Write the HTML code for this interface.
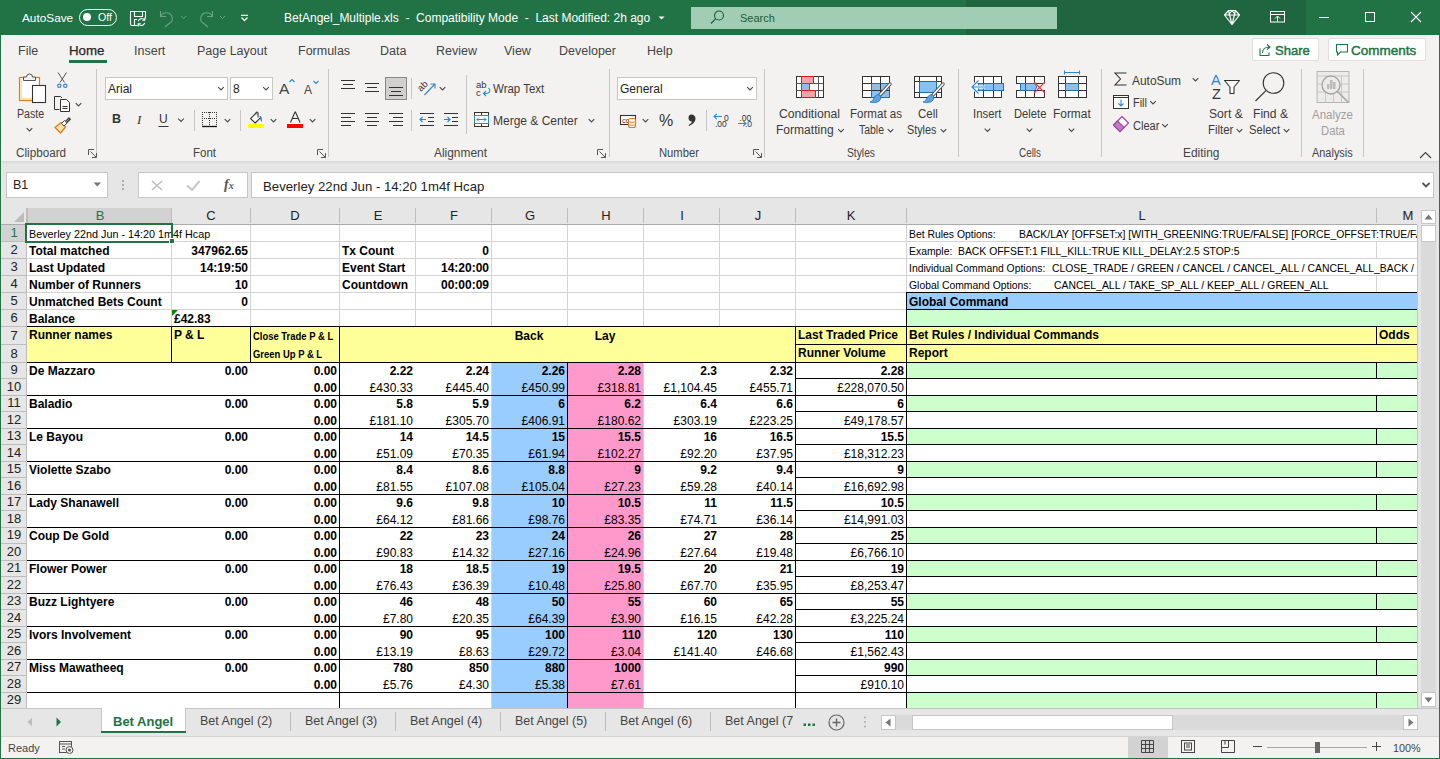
<!DOCTYPE html>
<html><head><meta charset="utf-8"><title>Excel</title>
<style>
*{margin:0;padding:0;box-sizing:border-box}
html,body{width:1440px;height:759px;overflow:hidden;background:#F3F2F1;font-family:"Liberation Sans",sans-serif}
div{position:absolute}
.t{white-space:nowrap;line-height:normal}
</style></head><body>

<div style="left:0px;top:0px;width:1440px;height:35px;background:#217346"></div>
<div style="left:966px;top:0px;width:340px;height:35px;background:#1F6640;border-top-left-radius:0"></div>
<div class="t" style="left:22px;top:11px;font-size:11.8px;color:#fff;font-weight:normal;">AutoSave</div>
<div style="left:79px;top:9px;width:38px;height:17px;border:1px solid #fff;border-radius:9px"></div>
<div style="left:83px;top:13px;width:8px;height:8px;background:#fff;border-radius:50%"></div>
<div class="t" style="left:98px;top:11px;font-size:10.5px;color:#fff;font-weight:normal;">Off</div>
<svg style="position:absolute;left:0;top:0" width="300" height="35" viewBox="0 0 300 35"><path d="M137.5 25.5H132a1.5 1.5 0 0 1-1.5-1.5V11.5h15V18.5" fill="none" stroke="#fff" stroke-width="1.1"/><path d="M134.5 11.5V16.5H142.5V11.5M134.5 25V19.5H137" fill="none" stroke="#fff" stroke-width="1.1"/><path d="M138.3 21.2a3.5 3.5 0 0 1 6.2-1.2M144.7 22.8a3.5 3.5 0 0 1-6.2 1.2" fill="none" stroke="#fff" stroke-width="1.1"/><path d="M144.8 17.6v2.6h-2.6M138.2 26.4v-2.6h2.6" fill="none" stroke="#fff" stroke-width="1.1"/><path d="M160.5 11v5.5h5.5" fill="none" stroke="#6BA484" stroke-width="1.1"/><path d="M160.8 16.2a6 6 0 0 1 11 5.3L165 27" fill="none" stroke="#6BA484" stroke-width="1.1"/><path d="M181 15.8l2.7 2.7 2.7-2.7" fill="none" stroke="#6BA484" stroke-width="1"/><path d="M212.5 11v5.5h-5.5" fill="none" stroke="#6BA484" stroke-width="1.1"/><path d="M212.2 16.2a6 6 0 0 0-11 5.3L208 27" fill="none" stroke="#6BA484" stroke-width="1.1"/><path d="M219.8 15.8l2.7 2.7 2.7-2.7" fill="none" stroke="#6BA484" stroke-width="1"/><path d="M241 15.3h7" stroke="#fff" stroke-width="1.1"/><path d="M241.5 17.5l3 3 3-3" fill="none" stroke="#fff" stroke-width="1.3"/></svg>
<div class="t" style="left:284px;top:11px;font-size:12px;color:#fff;font-weight:normal;">BetAngel_Multiple.xls&nbsp; - &nbsp;Compatibility Mode&nbsp; - &nbsp;Last Modified: 2h ago</div>
<svg style="position:absolute;left:657px;top:15px;" width="9" height="6" viewBox="0 0 9 6"><path d="M1.5 1.5h6l-3 3z" fill="#fff"/></svg>
<div style="left:691px;top:7px;width:366px;height:22px;background:#A0CDB3"></div>
<svg style="position:absolute;left:709px;top:9px;" width="16" height="16" viewBox="0 0 16 16"><circle cx="10" cy="6.5" r="4.5" fill="none" stroke="#1D5C38" stroke-width="1.1"/><path d="M6.8 9.7L2 14.5" stroke="#1D5C38" stroke-width="1.2"/></svg>
<div class="t" style="left:740px;top:12px;font-size:11px;color:#1D5C38;font-weight:normal;">Search</div>
<svg style="position:absolute;left:1223px;top:9px;" width="18" height="17" viewBox="0 0 18 17"><path d="M1.5 6l4-4.5h7l4 4.5-7.5 9.5z M1.5 6h15 M5.5 1.5l3.5 14 3.5-14 M5.5 6L9 1.5 12.5 6" fill="none" stroke="#fff" stroke-width="1.2" stroke-linejoin="round"/></svg>
<svg style="position:absolute;left:1270px;top:11px;" width="15" height="12" viewBox="0 0 15 12"><rect x="0.5" y="0.5" width="14" height="10.5" fill="none" stroke="#fff"/><path d="M0.5 3.5h14M7.5 10.5V5M5 7.5l2.5-2.5 2.5 2.5" fill="none" stroke="#fff"/></svg>
<div style="left:1319px;top:17px;width:10px;height:1px;background:#fff"></div>
<div style="left:1365px;top:12px;width:10px;height:10px;border:1px solid #fff"></div>
<svg style="position:absolute;left:1410px;top:11px;" width="12" height="12" viewBox="0 0 12 12"><path d="M1 1l10 10M11 1L1 11" stroke="#fff" stroke-width="1.1"/></svg>
<div style="left:0px;top:35px;width:1px;height:724px;background:#217346"></div>
<div style="left:1439px;top:35px;width:1px;height:724px;background:#217346"></div>
<div style="left:0px;top:758px;width:1440px;height:1px;background:#217346"></div>
<div class="t" style="left:18px;top:44px;font-size:12.5px;color:#444;font-weight:normal;">File</div>
<div class="t" style="left:69px;top:43px;font-size:13.3px;color:#262626;font-weight:normal;-webkit-text-stroke:0.25px #262626">Home</div>
<div class="t" style="left:134px;top:44px;font-size:12.5px;color:#444;font-weight:normal;">Insert</div>
<div class="t" style="left:197px;top:44px;font-size:12.5px;color:#444;font-weight:normal;">Page Layout</div>
<div class="t" style="left:298px;top:44px;font-size:12.5px;color:#444;font-weight:normal;">Formulas</div>
<div class="t" style="left:380px;top:44px;font-size:12.5px;color:#444;font-weight:normal;">Data</div>
<div class="t" style="left:436px;top:44px;font-size:12.5px;color:#444;font-weight:normal;">Review</div>
<div class="t" style="left:504px;top:44px;font-size:12.5px;color:#444;font-weight:normal;">View</div>
<div class="t" style="left:559px;top:44px;font-size:12.5px;color:#444;font-weight:normal;">Developer</div>
<div class="t" style="left:647px;top:44px;font-size:12.5px;color:#444;font-weight:normal;">Help</div>
<div style="left:69px;top:60px;width:38px;height:3px;background:#217346"></div>
<div style="left:1252px;top:38px;width:67px;height:23px;background:#fff;border:1px solid #E1DFDD;border-radius:2px"></div>
<svg style="position:absolute;left:1258px;top:43px;" width="14" height="14" viewBox="0 0 14 14"><path d="M2 5.5v7h9v-3" fill="none" stroke="#217346" stroke-width="1.1"/><path d="M4.5 10c0-4 3-6 7-6M9 1.5l3 2.5-3 2.5" fill="none" stroke="#217346" stroke-width="1.1"/></svg>
<div class="t" style="left:1275px;top:43px;font-size:13px;color:#217346;font-weight:normal;-webkit-text-stroke:0.45px #217346">Share</div>
<div style="left:1328px;top:38px;width:98px;height:23px;background:#fff;border:1px solid #E1DFDD;border-radius:2px"></div>
<svg style="position:absolute;left:1335px;top:43px;" width="14" height="13" viewBox="0 0 14 13"><path d="M1.5 1.5h11v7.5h-7l-3 3v-3h-1z" fill="none" stroke="#217346" stroke-width="1.1"/></svg>
<div class="t" style="left:1351px;top:43px;font-size:13.5px;color:#217346;font-weight:normal;-webkit-text-stroke:0.45px #217346">Comments</div>
<div style="left:96px;top:69px;width:1px;height:88px;background:#C8C6C4"></div>
<div style="left:328px;top:69px;width:1px;height:88px;background:#C8C6C4"></div>
<div style="left:609px;top:69px;width:1px;height:88px;background:#C8C6C4"></div>
<div style="left:764px;top:69px;width:1px;height:88px;background:#C8C6C4"></div>
<div style="left:958px;top:69px;width:1px;height:88px;background:#C8C6C4"></div>
<div style="left:1101px;top:69px;width:1px;height:88px;background:#C8C6C4"></div>
<div style="left:1301px;top:69px;width:1px;height:88px;background:#C8C6C4"></div>
<div style="left:1363px;top:69px;width:1px;height:88px;background:#C8C6C4"></div>
<div class="t" style="left:16px;top:146px;font-size:12px;color:#444;font-weight:normal;transform:scaleX(0.974);transform-origin:0 0;">Clipboard</div>
<div class="t" style="left:193px;top:146px;font-size:12px;color:#444;font-weight:normal;transform:scaleX(0.958);transform-origin:0 0;">Font</div>
<div class="t" style="left:434px;top:146px;font-size:12px;color:#444;font-weight:normal;transform:scaleX(0.993);transform-origin:0 0;">Alignment</div>
<div class="t" style="left:659px;top:146px;font-size:12px;color:#444;font-weight:normal;transform:scaleX(0.937);transform-origin:0 0;">Number</div>
<div class="t" style="left:847px;top:146px;font-size:12px;color:#444;font-weight:normal;transform:scaleX(0.857);transform-origin:0 0;">Styles</div>
<div class="t" style="left:1019px;top:146px;font-size:12px;color:#444;font-weight:normal;transform:scaleX(0.825);transform-origin:0 0;">Cells</div>
<div class="t" style="left:1183px;top:146px;font-size:12px;color:#444;font-weight:normal;transform:scaleX(0.992);transform-origin:0 0;">Editing</div>
<div class="t" style="left:1312px;top:146px;font-size:12px;color:#444;font-weight:normal;transform:scaleX(0.911);transform-origin:0 0;">Analysis</div>
<div style="left:0px;top:161px;width:1440px;height:598px;background:#E6E6E6"></div>
<div style="left:0px;top:161px;width:1440px;height:3px;background:linear-gradient(#D6D6D6,#E6E6E6)"></div>
<div style="left:0px;top:35px;width:1px;height:724px;background:#217346"></div>
<div style="left:1439px;top:35px;width:1px;height:724px;background:#217346"></div>
<div class="t" style="left:17px;top:107px;font-size:12px;color:#3B3A39;font-weight:normal;transform:scaleX(0.886);transform-origin:0 0;">Paste</div>
<div style="left:105px;top:77px;width:123px;height:23px;background:#fff;border:1px solid #C8C6C4"></div>
<div class="t" style="left:108px;top:82px;font-size:12px;color:#222;font-weight:normal;">Arial</div>
<div style="left:230px;top:77px;width:43px;height:23px;background:#fff;border:1px solid #C8C6C4"></div>
<div class="t" style="left:233px;top:82px;font-size:12px;color:#222;font-weight:normal;">8</div>
<div class="t" style="left:279px;top:80px;font-size:15.5px;color:#444;font-weight:normal;font-weight:normal">A</div>
<div class="t" style="left:304px;top:83px;font-size:12px;color:#444;font-weight:normal;">A</div>
<div class="t" style="left:112px;top:112px;font-size:12.5px;color:#333;font-weight:bold;">B</div>
<div class="t" style="left:137px;top:112px;font-size:13px;color:#333;font-weight:normal;font-style:italic;font-family:Liberation Serif,serif">I</div>
<div class="t" style="left:159px;top:112px;font-size:12px;color:#333;font-weight:normal;">U</div>
<div style="left:385px;top:77px;width:22px;height:23px;background:#D2D0CE;border:1px solid #8A8886"></div>
<div class="t" style="left:493px;top:82px;font-size:12px;color:#3B3A39;font-weight:normal;transform:scaleX(0.957);transform-origin:0 0;">Wrap Text</div>
<div class="t" style="left:493px;top:114px;font-size:12px;color:#3B3A39;font-weight:normal;transform:scaleX(1.000);transform-origin:0 0;">Merge &amp; Center</div>
<div style="left:617px;top:77px;width:140px;height:23px;background:#fff;border:1px solid #C8C6C4"></div>
<div class="t" style="left:620px;top:82px;font-size:12px;color:#222;font-weight:normal;">General</div>
<div class="t" style="left:659px;top:112px;font-size:16px;color:#333;font-weight:normal;">%</div>
<div class="t" style="left:779.4px;top:107px;font-size:12px;color:#3B3A39;font-weight:normal;transform:scaleX(1.016);transform-origin:0 0;">Conditional</div>
<div class="t" style="left:775.7px;top:123px;font-size:12px;color:#3B3A39;font-weight:normal;transform:scaleX(1.004);transform-origin:0 0;">Formatting</div>
<div class="t" style="left:850px;top:107px;font-size:12px;color:#3B3A39;font-weight:normal;transform:scaleX(0.963);transform-origin:0 0;">Format as</div>
<div class="t" style="left:859px;top:123px;font-size:12px;color:#3B3A39;font-weight:normal;transform:scaleX(0.871);transform-origin:0 0;">Table</div>
<div class="t" style="left:918px;top:107px;font-size:12px;color:#3B3A39;font-weight:normal;transform:scaleX(0.958);transform-origin:0 0;">Cell</div>
<div class="t" style="left:907.3px;top:123px;font-size:12px;color:#3B3A39;font-weight:normal;transform:scaleX(0.900);transform-origin:0 0;">Styles</div>
<div class="t" style="left:973.4px;top:107px;font-size:12px;color:#3B3A39;font-weight:normal;transform:scaleX(0.946);transform-origin:0 0;">Insert</div>
<div class="t" style="left:1013.6px;top:107px;font-size:12px;color:#3B3A39;font-weight:normal;transform:scaleX(0.934);transform-origin:0 0;">Delete</div>
<div class="t" style="left:1053px;top:107px;font-size:12px;color:#3B3A39;font-weight:normal;transform:scaleX(0.992);transform-origin:0 0;">Format</div>
<div class="t" style="left:1132px;top:74px;font-size:12px;color:#3B3A39;font-weight:normal;transform:scaleX(0.993);transform-origin:0 0;">AutoSum</div>
<div class="t" style="left:1133px;top:96px;font-size:12px;color:#3B3A39;font-weight:normal;transform:scaleX(0.907);transform-origin:0 0;">Fill</div>
<div class="t" style="left:1133px;top:119px;font-size:12px;color:#3B3A39;font-weight:normal;transform:scaleX(0.921);transform-origin:0 0;">Clear</div>
<div class="t" style="left:1211px;top:72px;font-size:14.5px;color:#2B88D8;font-weight:normal;">A</div>
<div class="t" style="left:1212px;top:86px;font-size:14.5px;color:#333;font-weight:normal;">Z</div>
<div class="t" style="left:1209px;top:107px;font-size:12px;color:#3B3A39;font-weight:normal;transform:scaleX(1.013);transform-origin:0 0;">Sort &amp;</div>
<div class="t" style="left:1208px;top:123px;font-size:12px;color:#3B3A39;font-weight:normal;transform:scaleX(0.952);transform-origin:0 0;">Filter</div>
<div class="t" style="left:1252.5px;top:107px;font-size:12px;color:#3B3A39;font-weight:normal;transform:scaleX(1.009);transform-origin:0 0;">Find &amp;</div>
<div class="t" style="left:1249px;top:123px;font-size:12px;color:#3B3A39;font-weight:normal;transform:scaleX(0.930);transform-origin:0 0;">Select</div>
<div class="t" style="left:1312px;top:108px;font-size:12px;color:#A19F9D;font-weight:normal;transform:scaleX(0.960);transform-origin:0 0;">Analyze</div>
<div class="t" style="left:1321px;top:124px;font-size:12px;color:#A19F9D;font-weight:normal;transform:scaleX(0.939);transform-origin:0 0;">Data</div>
<svg style="position:absolute;left:0;top:0" width="1440" height="170" viewBox="0 0 1440 170"><path d="M88.5 155v-5.5h5.5" fill="none" stroke="#555"/><path d="M90.5 151.5l5.5 5.5M96.5 153v4.5h-4.5" fill="none" stroke="#555"/><path d="M317.5 155v-5.5h5.5" fill="none" stroke="#555"/><path d="M319.5 151.5l5.5 5.5M325.5 153v4.5h-4.5" fill="none" stroke="#555"/><path d="M597.5 155v-5.5h5.5" fill="none" stroke="#555"/><path d="M599.5 151.5l5.5 5.5M605.5 153v4.5h-4.5" fill="none" stroke="#555"/><path d="M753.5 155v-5.5h5.5" fill="none" stroke="#555"/><path d="M755.5 151.5l5.5 5.5M761.5 153v4.5h-4.5" fill="none" stroke="#555"/><rect x="19.5" y="77.5" width="20" height="23" fill="#fff" stroke="#E87A1B" stroke-width="1.2"/><path d="M21 79v20h11" fill="none" stroke="#FCE4A8" stroke-width="2"/><path d="M23.5 80.5v-3.5h3a3 3 0 0 1 6 0h3v3.5z" fill="#F3F2F1" stroke="#555"/><rect x="32.5" y="85.5" width="13" height="17" fill="#fff" stroke="#333" stroke-width="1.1"/><path d="M26.7 128.1l2.8 2.8 2.8-2.8" fill="none" stroke="#444" stroke-width="1.05"/><path d="M58 72.5l6.5 10M66.5 72.5l-6.5 10" stroke="#555" stroke-width="1"/><circle cx="59.3" cy="85.8" r="1.7" fill="none" stroke="#2B88D8" stroke-width="1.2"/><circle cx="65.3" cy="85.8" r="1.7" fill="none" stroke="#2B88D8" stroke-width="1.2"/><path d="M54.5 109.5v-13h6l1.5 1.5" fill="none" stroke="#333"/><path d="M54.5 109.5h5" stroke="#333"/><path d="M60.5 111.5v-12h6l3 3v9z" fill="#fff" stroke="#333"/><path d="M62.5 106.5h5M62.5 108.5h5" stroke="#333"/><path d="M75.7 103.1l2.8 2.8 2.8-2.8" fill="none" stroke="#444" stroke-width="1.05"/><path d="M55 127.5l6-5 4.5 4.5-5 6z" fill="#FCE4A8" stroke="#E87A1B" stroke-width="1.3" stroke-linejoin="round"/><path d="M61.5 123.5l3-3 2.5 2.5-3 3z" fill="#fff" stroke="#444"/><path d="M65.5 121.5l3.5-3.5 1.2 1.2-3.5 3.5" fill="none" stroke="#444" stroke-width="1.4"/><path d="M218.2 87.1l2.8 2.8 2.8-2.8" fill="none" stroke="#444" stroke-width="1.05"/><path d="M263.2 87.1l2.8 2.8 2.8-2.8" fill="none" stroke="#444" stroke-width="1.05"/><path d="M289.5 82l2.5-2.5 2.5 2.5" fill="none" stroke="#2B88D8" stroke-width="1.1"/><path d="M313.5 81l2.5 2.5 2.5-2.5" fill="none" stroke="#2B88D8" stroke-width="1.1"/><path d="M158.5 126.5H168.5" stroke="#333" stroke-width="1"/><path d="M178.2 118.6l2.8 2.8 2.8-2.8" fill="none" stroke="#444" stroke-width="1.05"/><path d="M194.5 110v21" stroke="#C8C6C4"/><rect x="202" y="112" width="1" height="1" fill="#333"/><rect x="202" y="118" width="1" height="1" fill="#333"/><rect x="204" y="112" width="1" height="1" fill="#333"/><rect x="204" y="118" width="1" height="1" fill="#333"/><rect x="206" y="112" width="1" height="1" fill="#333"/><rect x="206" y="118" width="1" height="1" fill="#333"/><rect x="208" y="112" width="1" height="1" fill="#333"/><rect x="208" y="118" width="1" height="1" fill="#333"/><rect x="210" y="112" width="1" height="1" fill="#333"/><rect x="210" y="118" width="1" height="1" fill="#333"/><rect x="212" y="112" width="1" height="1" fill="#333"/><rect x="212" y="118" width="1" height="1" fill="#333"/><rect x="214" y="112" width="1" height="1" fill="#333"/><rect x="214" y="118" width="1" height="1" fill="#333"/><rect x="216" y="112" width="1" height="1" fill="#333"/><rect x="216" y="118" width="1" height="1" fill="#333"/><rect x="202" y="112" width="1" height="1" fill="#333"/><rect x="216" y="112" width="1" height="1" fill="#333"/><rect x="209" y="112" width="1" height="1" fill="#333"/><rect x="202" y="114" width="1" height="1" fill="#333"/><rect x="216" y="114" width="1" height="1" fill="#333"/><rect x="209" y="114" width="1" height="1" fill="#333"/><rect x="202" y="116" width="1" height="1" fill="#333"/><rect x="216" y="116" width="1" height="1" fill="#333"/><rect x="209" y="116" width="1" height="1" fill="#333"/><rect x="202" y="118" width="1" height="1" fill="#333"/><rect x="216" y="118" width="1" height="1" fill="#333"/><rect x="209" y="118" width="1" height="1" fill="#333"/><rect x="202" y="120" width="1" height="1" fill="#333"/><rect x="216" y="120" width="1" height="1" fill="#333"/><rect x="209" y="120" width="1" height="1" fill="#333"/><rect x="202" y="122" width="1" height="1" fill="#333"/><rect x="216" y="122" width="1" height="1" fill="#333"/><rect x="209" y="122" width="1" height="1" fill="#333"/><rect x="202" y="124" width="1" height="1" fill="#333"/><rect x="216" y="124" width="1" height="1" fill="#333"/><rect x="209" y="124" width="1" height="1" fill="#333"/><path d="M202 126.5H217" stroke="#111" stroke-width="1.3"/><path d="M224.7 119.1l2.8 2.8 2.8-2.8" fill="none" stroke="#444" stroke-width="1.05"/><path d="M240.5 110v21" stroke="#C8C6C4"/><path d="M256 113.2L250.6 118.6L255.2 123L260.3 117.8" fill="#fff" stroke="#333" stroke-width="1.1" stroke-linejoin="round"/><path d="M256 114.5v-1.5a1 1 0 0 1 2 0v4.5" fill="none" stroke="#333" stroke-width="1.1"/><path d="M259.6 116c1.4-0.2 2.6 1.2 2.3 6-0.9-0.8-1.6-2.8-2.3-6z" fill="#1F6FB5"/><rect x="248" y="124" width="16" height="4" fill="#FFFF00"/><path d="M270.7 119.1l2.8 2.8 2.8-2.8" fill="none" stroke="#444" stroke-width="1.05"/><path d="M290.5 122.5l4.5-10.5h0.5l4.5 10.5M292.3 118.5h6" fill="none" stroke="#333" stroke-width="1.1"/><rect x="287" y="124" width="16" height="4" fill="#FF0000"/><path d="M309.7 119.1l2.8 2.8 2.8-2.8" fill="none" stroke="#444" stroke-width="1.05"/><path d="M341 80.5H355" stroke="#333" stroke-width="1"/><path d="M343 84.5H353" stroke="#333" stroke-width="1"/><path d="M341 88.5H355" stroke="#333" stroke-width="1"/><path d="M365 83.5H379" stroke="#333" stroke-width="1"/><path d="M367 87.5H377" stroke="#333" stroke-width="1"/><path d="M365 91.5H379" stroke="#333" stroke-width="1"/><path d="M389 87.5H403" stroke="#333" stroke-width="1"/><path d="M391 91.5H401" stroke="#333" stroke-width="1"/><path d="M389 95.5H403" stroke="#333" stroke-width="1"/><path d="M411.5 78v21M411.5 110v21M466.5 75v59" stroke="#C8C6C4"/><text x="0" y="0" font-size="9.5" fill="#333" font-family="Liberation Sans" transform="translate(421 92) rotate(-45)">ab</text><path d="M424.5 95l10-10.5M430.5 84h4.5v4.5" fill="none" stroke="#2B88D8" stroke-width="1.1"/><path d="M439.7 87.1l2.8 2.8 2.8-2.8" fill="none" stroke="#444" stroke-width="1.05"/><text x="476" y="87.5" font-size="9.5" fill="#333" font-family="Liberation Sans">ab</text><text x="476" y="95.5" font-size="9.5" fill="#333" font-family="Liberation Sans">c</text><path d="M488.5 88c2 1 2 5-1.5 5.5h-3.5M486 91l-2.5 2.5 2.5 2.5" fill="none" stroke="#2B88D8" stroke-width="1.1"/><path d="M341 113.5H355" stroke="#333" stroke-width="1"/><path d="M341 117.5H351" stroke="#333" stroke-width="1"/><path d="M341 121.5H355" stroke="#333" stroke-width="1"/><path d="M341 125.5H351" stroke="#333" stroke-width="1"/><path d="M365 113.5H379" stroke="#333" stroke-width="1"/><path d="M367 117.5H377" stroke="#333" stroke-width="1"/><path d="M365 121.5H379" stroke="#333" stroke-width="1"/><path d="M367 125.5H377" stroke="#333" stroke-width="1"/><path d="M389 113.5H403" stroke="#333" stroke-width="1"/><path d="M393 117.5H403" stroke="#333" stroke-width="1"/><path d="M389 121.5H403" stroke="#333" stroke-width="1"/><path d="M393 125.5H403" stroke="#333" stroke-width="1"/><path d="M420 113.5H434" stroke="#333" stroke-width="1"/><path d="M428 117.5H434" stroke="#333" stroke-width="1"/><path d="M428 121.5H434" stroke="#333" stroke-width="1"/><path d="M420 125.5H434" stroke="#333" stroke-width="1"/><path d="M420 119.5h6M422.5 117l-2.5 2.5 2.5 2.5" fill="none" stroke="#2B88D8" stroke-width="1.2"/><path d="M444 113.5H458" stroke="#333" stroke-width="1"/><path d="M452 117.5H458" stroke="#333" stroke-width="1"/><path d="M452 121.5H458" stroke="#333" stroke-width="1"/><path d="M444 125.5H458" stroke="#333" stroke-width="1"/><path d="M444 119.5h6M447.5 117l2.5 2.5-2.5 2.5" fill="none" stroke="#2B88D8" stroke-width="1.2"/><rect x="474.5" y="112.5" width="14" height="14" fill="#fff" stroke="#333"/><path d="M481.5 112.5v3M481.5 123.5v3" stroke="#333"/><rect x="474.5" y="115.5" width="14" height="8" fill="#fff" stroke="#2B88D8"/><path d="M477 119.5h9M479 117.5l-2 2 2 2M484 117.5l2 2-2 2" fill="none" stroke="#2B88D8" stroke-width="1"/><path d="M588.7 119.1l2.8 2.8 2.8-2.8" fill="none" stroke="#444" stroke-width="1.05"/><path d="M747.2 87.1l2.8 2.8 2.8-2.8" fill="none" stroke="#444" stroke-width="1.05"/><rect x="620.5" y="115.5" width="15" height="9" fill="#fff" stroke="#333" stroke-width="1.1"/><text x="622" y="123" font-size="7.5" fill="#333" font-family="Liberation Sans">cc</text><rect x="628.5" y="118.5" width="7" height="9" rx="2" fill="#fff" stroke="#E87A1B" stroke-width="1.1"/><path d="M628.5 121.5c0 1 7 1 7 0M628.5 124.5c0 1 7 1 7 0" fill="none" stroke="#E87A1B"/><path d="M642.7 119.1l2.8 2.8 2.8-2.8" fill="none" stroke="#444" stroke-width="1.05"/><path d="M691 114.5c3 0 4.5 2 4.5 4 0 3-2.5 6-6.5 7.5l-0.5-1c2-1 3-2 3.5-3.5-2 0-3.5-1-3.5-3.5 0-2 1.2-3.5 2.5-3.5z" fill="#333"/><path d="M706.5 110v21" stroke="#C8C6C4"/><path d="M714 116.5h8M716.8 113.8l-2.8 2.7 2.8 2.7" fill="none" stroke="#2B88D8" stroke-width="1.1"/><text x="724" y="121" font-size="8.5" fill="#333" font-family="Liberation Sans">0</text><text x="715" y="127" font-size="8.5" fill="#333" font-family="Liberation Sans">.00</text><text x="739.5" y="121" font-size="8.5" fill="#333" font-family="Liberation Sans">.00</text><text x="745" y="127" font-size="8.5" fill="#333" font-family="Liberation Sans">.0</text><path d="M738 123.5h8M743.2 120.8l2.8 2.7-2.8 2.7" fill="none" stroke="#2B88D8" stroke-width="1.1"/><rect x="796.5" y="76.5" width="27" height="21" fill="#fff" stroke="#333"/><path d="M796.5 83.5h27M796.5 90.5h27M818.5 76.5v21" stroke="#555"/><rect x="801.5" y="76.5" width="12" height="7" fill="#F6A2A6" stroke="#E81123"/><rect x="801.5" y="83.5" width="8" height="7" fill="#8CC0EC" stroke="#1F6FB5"/><rect x="801.5" y="90.5" width="14" height="7" fill="#F6A2A6" stroke="#E81123"/><path d="M838.2 129.1l2.8 2.8 2.8-2.8" fill="none" stroke="#444" stroke-width="1.05"/><rect x="862.5" y="76.5" width="27" height="21" fill="#fff" stroke="#333"/><rect x="871.5" y="83.5" width="18" height="14" fill="#8CC0EC" stroke="#1F6FB5"/><path d="M862.5 83.5h9M862.5 90.5h9M871.5 76.5v7M880.5 76.5v7M880.5 83.5v14M871.5 90.5h18" stroke="#333"/><path d="M890 84L879 96" stroke="#555" stroke-width="3.4" stroke-linecap="round"/><path d="M890 84L879 96" stroke="#fff" stroke-width="1.6" stroke-linecap="round"/><path d="M880 95c-3-1-5 1-6 3-1 2-2 3.5-4 4 3 1 8 1 10-2 1-1.5 1-3 0-5z" fill="#5FA3E0" stroke="#1F6FB5" stroke-width="0.8"/><path d="M887.7 129.1l2.8 2.8 2.8-2.8" fill="none" stroke="#444" stroke-width="1.05"/><rect x="914.5" y="76.5" width="27" height="21" fill="#fff" stroke="#333"/><path d="M914.5 81.5h27M914.5 92.5h27M919.5 76.5v21M936.5 76.5v21" stroke="#333"/><rect x="919.5" y="81.5" width="17" height="11" fill="#8CC0EC" stroke="#1F6FB5"/><path d="M943 84L932 96" stroke="#555" stroke-width="3.4" stroke-linecap="round"/><path d="M943 84L932 96" stroke="#fff" stroke-width="1.6" stroke-linecap="round"/><path d="M933 95c-3-1-5 1-6 3-1 2-2 3.5-4 4 3 1 8 1 10-2 1-1.5 1-3 0-5z" fill="#5FA3E0" stroke="#1F6FB5" stroke-width="0.8"/><path d="M940.7 129.1l2.8 2.8 2.8-2.8" fill="none" stroke="#444" stroke-width="1.05"/><rect x="974.5" y="76.5" width="27" height="21" fill="#fff" stroke="none"/><path d="M974 76.5H1002M974 97.5H1002M974 83.5H1001M974 90.5H1001M983.5 76V97M993.5 76V97" stroke="#333" fill="none"/><path d="M974.5 76V83.5M974.5 90V98" stroke="#333"/><path d="M1001.5 76V98" stroke="#333"/><rect x="978.5" y="83.5" width="25" height="7" fill="#8CC0EC" stroke="#1F6FB5"/><path d="M993.5 83.5v7M983.5 83.5v7" stroke="#1F6FB5"/><path d="M973 87h12M978.5 80.5l-6.5 6.5 6.5 6.5" fill="none" stroke="#fff" stroke-width="3"/><path d="M973 87h12M978.5 80.5l-6.5 6.5 6.5 6.5" fill="none" stroke="#2B88D8" stroke-width="1.2"/><path d="M984.7 128.6l2.8 2.8 2.8-2.8" fill="none" stroke="#444" stroke-width="1.05"/><rect x="1016.5" y="76.5" width="28" height="21" fill="#fff" stroke="none"/><path d="M1016 76.5H1045M1016 97.5H1045M1016 83.5H1044M1016 90.5H1044M1025.5 76V97M1034.5 76V97" stroke="#333" fill="none"/><path d="M1016.5 76V83.5M1016.5 90V98" stroke="#333"/><path d="M1044.5 76V83.5M1044.5 90V98" stroke="#333"/><path d="M1020.5 83.5h14l2.5 3.5-2.5 3.5h-14z" fill="#8CC0EC" stroke="#1F6FB5"/><path d="M1025.5 83.5v7" stroke="#1F6FB5"/><path d="M1034 82l11 11M1045 82l-11 11" stroke="#F03A3A" stroke-width="1.2"/><path d="M1026.7 128.6l2.8 2.8 2.8-2.8" fill="none" stroke="#444" stroke-width="1.05"/><rect x="1058.5" y="76.5" width="28" height="21" fill="#fff" stroke="none"/><path d="M1058 76.5H1087M1058 97.5H1087M1058 83.5H1086M1058 90.5H1086M1065.5 76V97M1078.5 76V97" stroke="#333" fill="none"/><path d="M1058.5 76V98" stroke="#333"/><path d="M1086.5 76V98" stroke="#333"/><rect x="1065.5" y="83.5" width="13" height="7" fill="#8CC0EC" stroke="#1F6FB5"/><path d="M1064.5 72.5h15M1064.5 70.5v4M1079.5 70.5v4" stroke="#2B88D8" stroke-width="1.1"/><path d="M1068.7 128.6l2.8 2.8 2.8-2.8" fill="none" stroke="#444" stroke-width="1.05"/><path d="M1126.5 73H1115l5.5 6-5.5 6h11.5" fill="none" stroke="#333" stroke-width="1.1"/><path d="M1192.7 78.1l2.8 2.8 2.8-2.8" fill="none" stroke="#444" stroke-width="1.05"/><rect x="1113.5" y="95.5" width="15" height="13" fill="#fff" stroke="#333"/><path d="M1113.5 97.5h15" stroke="#333"/><path d="M1121 99.5v6.5M1118.5 103.5l2.5 2.5 2.5-2.5" fill="none" stroke="#2B88D8" stroke-width="1.1"/><path d="M1150.2 101.1l2.8 2.8 2.8-2.8" fill="none" stroke="#444" stroke-width="1.05"/><path d="M1113.5 125l8.5-8.5 6.5 6.5-8.5 8.5z" fill="#fff" stroke="#A349A4" stroke-width="1.2" stroke-linejoin="round"/><path d="M1113.5 125l4-4 6.5 6.5-4 4z" fill="#C27CC2" stroke="#A349A4" stroke-width="1.2" stroke-linejoin="round"/><path d="M1162.2 124.1l2.8 2.8 2.8-2.8" fill="none" stroke="#444" stroke-width="1.05"/><path d="M1224.5 80.5h15l-5.5 6.5v6.5h-4v-6.5z" fill="#fff" stroke="#333" stroke-width="1.1" stroke-linejoin="round"/><path d="M1236.7 129.1l2.8 2.8 2.8-2.8" fill="none" stroke="#444" stroke-width="1.05"/><circle cx="1273.5" cy="83" r="10.3" fill="none" stroke="#333" stroke-width="1.1"/><path d="M1266.2 90.3L1255.5 101" stroke="#333" stroke-width="1.1"/><path d="M1283.7 129.1l2.8 2.8 2.8-2.8" fill="none" stroke="#444" stroke-width="1.05"/><rect x="1317" y="71.5" width="32" height="31" fill="#EDEBE9" stroke="#B5B5B5"/><path d="M1317 76h32M1317 84h32M1317 92h32M1325.5 76v26M1333.5 76v26M1341.5 76v26" stroke="#C8C8C8"/>
<circle cx="1331" cy="85" r="9" fill="#EDEBE9" stroke="#A6A6A6" stroke-width="1.4"/><rect x="1327" y="84" width="2.5" height="5" fill="#BBB"/><rect x="1330" y="80" width="2.5" height="9" fill="#BBB"/><rect x="1333" y="82" width="2.5" height="7" fill="#BBB"/>
<path d="M1337.5 91.5l11 11" stroke="#A6A6A6" stroke-width="1.6"/><path d="M1420 158l5.5-5.5 5.5 5.5" fill="none" stroke="#444" stroke-width="1.2"/></svg>
<div style="left:6px;top:172px;width:102px;height:26px;background:#fff;border:1px solid #C6C6C6"></div>
<div class="t" style="left:13px;top:178px;font-size:12.5px;color:#222;font-weight:normal;">B1</div>
<svg style="position:absolute;left:93px;top:182px;" width="9" height="5" viewBox="0 0 9 5"><path d="M0.5 0.5h7.5l-3.75 4z" fill="#777"/></svg>
<svg style="position:absolute;left:121px;top:179px;" width="4" height="12" viewBox="0 0 4 12"><circle cx="2" cy="2" r="1" fill="#999"/><circle cx="2" cy="6" r="1" fill="#999"/><circle cx="2" cy="10" r="1" fill="#999"/></svg>
<div style="left:138px;top:172px;width:110px;height:26px;background:#fff;border:1px solid #C6C6C6"></div>
<svg style="position:absolute;left:151px;top:180px;" width="12" height="11" viewBox="0 0 12 11"><path d="M1 1l10 9M11 1L1 10" stroke="#BDBDBD" stroke-width="1.5"/></svg>
<svg style="position:absolute;left:186px;top:179px;" width="15" height="13" viewBox="0 0 15 13"><path d="M1 6.5l5 4.5 7.5-9" fill="none" stroke="#C8C8C8" stroke-width="2"/></svg>
<div class="t" style="left:224px;top:177px;font-size:14px;color:#555;font-weight:normal;font-family:Liberation Serif,serif"><b><i>f</i></b><span style="font-size:10px;font-weight:bold"><i>x</i></span></div>
<div style="left:251px;top:172px;width:1183px;height:26px;background:#fff;border:1px solid #C6C6C6"></div>
<div class="t" style="left:263px;top:179px;font-size:13.2px;color:#222;font-weight:normal;">Beverley 22nd Jun - 14:20 1m4f Hcap</div>
<svg style="position:absolute;left:1421px;top:182px;" width="10" height="6" viewBox="0 0 10 6"><path d="M1.5 1l3.5 3.5 3.5-3.5" fill="none" stroke="#555" stroke-width="1.8"/></svg>
<div style="left:27px;top:224px;width:1390px;height:484px;background:#fff"></div>
<div style="left:0px;top:208px;width:1417px;height:17px;background:#E6E6E6"></div>
<div style="left:1px;top:225px;width:26px;height:483px;background:#E6E6E6"></div>
<svg style="position:absolute;left:14px;top:212px;" width="10" height="10" viewBox="0 0 10 10"><path d="M10 0v10H0z" fill="#BDBDBD"/></svg>
<div style="left:27px;top:225px;width:1px;height:483px;background:#D4D4D4"></div>
<div style="left:171px;top:225px;width:1px;height:483px;background:#D4D4D4"></div>
<div style="left:250px;top:225px;width:1px;height:483px;background:#D4D4D4"></div>
<div style="left:339px;top:225px;width:1px;height:483px;background:#D4D4D4"></div>
<div style="left:415px;top:225px;width:1px;height:483px;background:#D4D4D4"></div>
<div style="left:491px;top:225px;width:1px;height:483px;background:#D4D4D4"></div>
<div style="left:567px;top:225px;width:1px;height:483px;background:#D4D4D4"></div>
<div style="left:643px;top:225px;width:1px;height:483px;background:#D4D4D4"></div>
<div style="left:719px;top:225px;width:1px;height:483px;background:#D4D4D4"></div>
<div style="left:795px;top:225px;width:1px;height:483px;background:#D4D4D4"></div>
<div style="left:906px;top:225px;width:1px;height:483px;background:#D4D4D4"></div>
<div style="left:1376px;top:225px;width:1px;height:483px;background:#D4D4D4"></div>
<div style="left:27px;top:241px;width:1390px;height:1px;background:#D4D4D4"></div>
<div style="left:27px;top:258px;width:1390px;height:1px;background:#D4D4D4"></div>
<div style="left:27px;top:275px;width:1390px;height:1px;background:#D4D4D4"></div>
<div style="left:27px;top:292px;width:1390px;height:1px;background:#D4D4D4"></div>
<div style="left:27px;top:309px;width:1390px;height:1px;background:#D4D4D4"></div>
<div style="left:27px;top:326px;width:1390px;height:1px;background:#D4D4D4"></div>
<div style="left:27px;top:344px;width:1390px;height:1px;background:#D4D4D4"></div>
<div style="left:27px;top:362px;width:1390px;height:1px;background:#D4D4D4"></div>
<div style="left:27px;top:378px;width:1390px;height:1px;background:#D4D4D4"></div>
<div style="left:27px;top:395px;width:1390px;height:1px;background:#D4D4D4"></div>
<div style="left:27px;top:411px;width:1390px;height:1px;background:#D4D4D4"></div>
<div style="left:27px;top:428px;width:1390px;height:1px;background:#D4D4D4"></div>
<div style="left:27px;top:444px;width:1390px;height:1px;background:#D4D4D4"></div>
<div style="left:27px;top:461px;width:1390px;height:1px;background:#D4D4D4"></div>
<div style="left:27px;top:477px;width:1390px;height:1px;background:#D4D4D4"></div>
<div style="left:27px;top:494px;width:1390px;height:1px;background:#D4D4D4"></div>
<div style="left:27px;top:510px;width:1390px;height:1px;background:#D4D4D4"></div>
<div style="left:27px;top:527px;width:1390px;height:1px;background:#D4D4D4"></div>
<div style="left:27px;top:543px;width:1390px;height:1px;background:#D4D4D4"></div>
<div style="left:27px;top:560px;width:1390px;height:1px;background:#D4D4D4"></div>
<div style="left:27px;top:576px;width:1390px;height:1px;background:#D4D4D4"></div>
<div style="left:27px;top:593px;width:1390px;height:1px;background:#D4D4D4"></div>
<div style="left:27px;top:609px;width:1390px;height:1px;background:#D4D4D4"></div>
<div style="left:27px;top:626px;width:1390px;height:1px;background:#D4D4D4"></div>
<div style="left:27px;top:642px;width:1390px;height:1px;background:#D4D4D4"></div>
<div style="left:27px;top:659px;width:1390px;height:1px;background:#D4D4D4"></div>
<div style="left:27px;top:675px;width:1390px;height:1px;background:#D4D4D4"></div>
<div style="left:27px;top:692px;width:1390px;height:1px;background:#D4D4D4"></div>
<div style="left:27px;top:708px;width:1390px;height:1px;background:#D4D4D4"></div>
<div style="left:27px;top:225px;width:879px;height:101px;background:#fff"></div>
<div style="left:27px;top:327px;width:768px;height:35px;background:#FFFF99"></div>
<div style="left:796px;top:327px;width:110px;height:35px;background:#FFFF99"></div>
<div style="left:907px;top:327px;width:510px;height:35px;background:#FFFF99"></div>
<div style="left:27px;top:363px;width:464px;height:345px;background:#fff"></div>
<div style="left:492px;top:363px;width:75px;height:345px;background:#99CCFF"></div>
<div style="left:568px;top:363px;width:75px;height:345px;background:#FF99CC"></div>
<div style="left:644px;top:363px;width:262px;height:345px;background:#fff"></div>
<div style="left:907px;top:293px;width:510px;height:16px;background:#99CCFF"></div>
<div style="left:907px;top:310px;width:510px;height:16px;background:#CCFFCC"></div>
<div style="left:907px;top:363px;width:510px;height:15px;background:#CCFFCC"></div>
<div style="left:907px;top:379px;width:510px;height:16px;background:#fff"></div>
<div style="left:907px;top:396px;width:510px;height:15px;background:#CCFFCC"></div>
<div style="left:907px;top:412px;width:510px;height:16px;background:#fff"></div>
<div style="left:907px;top:429px;width:510px;height:15px;background:#CCFFCC"></div>
<div style="left:907px;top:445px;width:510px;height:16px;background:#fff"></div>
<div style="left:907px;top:462px;width:510px;height:15px;background:#CCFFCC"></div>
<div style="left:907px;top:478px;width:510px;height:16px;background:#fff"></div>
<div style="left:907px;top:495px;width:510px;height:15px;background:#CCFFCC"></div>
<div style="left:907px;top:511px;width:510px;height:16px;background:#fff"></div>
<div style="left:907px;top:528px;width:510px;height:15px;background:#CCFFCC"></div>
<div style="left:907px;top:544px;width:510px;height:16px;background:#fff"></div>
<div style="left:907px;top:561px;width:510px;height:15px;background:#CCFFCC"></div>
<div style="left:907px;top:577px;width:510px;height:16px;background:#fff"></div>
<div style="left:907px;top:594px;width:510px;height:15px;background:#CCFFCC"></div>
<div style="left:907px;top:610px;width:510px;height:16px;background:#fff"></div>
<div style="left:907px;top:627px;width:510px;height:15px;background:#CCFFCC"></div>
<div style="left:907px;top:643px;width:510px;height:16px;background:#fff"></div>
<div style="left:907px;top:660px;width:510px;height:15px;background:#CCFFCC"></div>
<div style="left:907px;top:676px;width:510px;height:16px;background:#fff"></div>
<div style="left:907px;top:693px;width:510px;height:15px;background:#CCFFCC"></div>
<div style="left:171px;top:225px;width:1px;height:101px;background:#D4D4D4"></div>
<div style="left:250px;top:225px;width:1px;height:101px;background:#D4D4D4"></div>
<div style="left:339px;top:225px;width:1px;height:101px;background:#D4D4D4"></div>
<div style="left:415px;top:225px;width:1px;height:101px;background:#D4D4D4"></div>
<div style="left:491px;top:225px;width:1px;height:101px;background:#D4D4D4"></div>
<div style="left:567px;top:225px;width:1px;height:101px;background:#D4D4D4"></div>
<div style="left:643px;top:225px;width:1px;height:101px;background:#D4D4D4"></div>
<div style="left:719px;top:225px;width:1px;height:101px;background:#D4D4D4"></div>
<div style="left:795px;top:225px;width:1px;height:101px;background:#D4D4D4"></div>
<div style="left:906px;top:225px;width:1px;height:67px;background:#D4D4D4"></div>
<div style="left:1376px;top:225px;width:1px;height:67px;background:#D4D4D4"></div>
<div style="left:27px;top:241px;width:1390px;height:1px;background:#D4D4D4"></div>
<div style="left:27px;top:258px;width:1390px;height:1px;background:#D4D4D4"></div>
<div style="left:27px;top:275px;width:1390px;height:1px;background:#D4D4D4"></div>
<div style="left:27px;top:292px;width:1390px;height:1px;background:#D4D4D4"></div>
<div style="left:27px;top:309px;width:879px;height:1px;background:#D4D4D4"></div>
<div style="left:27px;top:326px;width:1391px;height:1px;background:#000"></div>
<div style="left:171px;top:326px;width:1px;height:37px;background:#000"></div>
<div style="left:250px;top:326px;width:1px;height:37px;background:#000"></div>
<div style="left:339px;top:326px;width:1px;height:37px;background:#000"></div>
<div style="left:339px;top:362px;width:1px;height:347px;background:#000"></div>
<div style="left:27px;top:362px;width:769px;height:1px;background:#000"></div>
<div style="left:27px;top:395px;width:769px;height:1px;background:#000"></div>
<div style="left:27px;top:428px;width:769px;height:1px;background:#000"></div>
<div style="left:27px;top:461px;width:769px;height:1px;background:#000"></div>
<div style="left:27px;top:494px;width:769px;height:1px;background:#000"></div>
<div style="left:27px;top:527px;width:769px;height:1px;background:#000"></div>
<div style="left:27px;top:560px;width:769px;height:1px;background:#000"></div>
<div style="left:27px;top:593px;width:769px;height:1px;background:#000"></div>
<div style="left:27px;top:626px;width:769px;height:1px;background:#000"></div>
<div style="left:27px;top:659px;width:769px;height:1px;background:#000"></div>
<div style="left:27px;top:692px;width:769px;height:1px;background:#000"></div>
<div style="left:567px;top:362px;width:1px;height:347px;background:#000"></div>
<div style="left:795px;top:326px;width:1px;height:383px;background:#000"></div>
<div style="left:906px;top:292px;width:1px;height:417px;background:#000"></div>
<div style="left:795px;top:326px;width:623px;height:1px;background:#000"></div>
<div style="left:795px;top:344px;width:623px;height:1px;background:#000"></div>
<div style="left:795px;top:362px;width:623px;height:1px;background:#000"></div>
<div style="left:795px;top:378px;width:623px;height:1px;background:#000"></div>
<div style="left:795px;top:395px;width:623px;height:1px;background:#000"></div>
<div style="left:795px;top:411px;width:623px;height:1px;background:#000"></div>
<div style="left:795px;top:428px;width:623px;height:1px;background:#000"></div>
<div style="left:795px;top:444px;width:623px;height:1px;background:#000"></div>
<div style="left:795px;top:461px;width:623px;height:1px;background:#000"></div>
<div style="left:795px;top:477px;width:623px;height:1px;background:#000"></div>
<div style="left:795px;top:494px;width:623px;height:1px;background:#000"></div>
<div style="left:795px;top:510px;width:623px;height:1px;background:#000"></div>
<div style="left:795px;top:527px;width:623px;height:1px;background:#000"></div>
<div style="left:795px;top:543px;width:623px;height:1px;background:#000"></div>
<div style="left:795px;top:560px;width:623px;height:1px;background:#000"></div>
<div style="left:795px;top:576px;width:623px;height:1px;background:#000"></div>
<div style="left:795px;top:593px;width:623px;height:1px;background:#000"></div>
<div style="left:795px;top:609px;width:623px;height:1px;background:#000"></div>
<div style="left:795px;top:626px;width:623px;height:1px;background:#000"></div>
<div style="left:795px;top:642px;width:623px;height:1px;background:#000"></div>
<div style="left:795px;top:659px;width:623px;height:1px;background:#000"></div>
<div style="left:795px;top:675px;width:623px;height:1px;background:#000"></div>
<div style="left:795px;top:692px;width:623px;height:1px;background:#000"></div>
<div style="left:795px;top:344px;width:112px;height:1px;background:#000"></div>
<div style="left:906px;top:292px;width:512px;height:1px;background:#000"></div>
<div style="left:906px;top:309px;width:512px;height:1px;background:#000"></div>
<div style="left:1376px;top:326px;width:1px;height:19px;background:#000"></div>
<div style="left:1376px;top:362px;width:1px;height:17px;background:#000"></div>
<div style="left:1376px;top:395px;width:1px;height:17px;background:#000"></div>
<div style="left:1376px;top:428px;width:1px;height:17px;background:#000"></div>
<div style="left:1376px;top:461px;width:1px;height:17px;background:#000"></div>
<div style="left:1376px;top:494px;width:1px;height:17px;background:#000"></div>
<div style="left:1376px;top:527px;width:1px;height:17px;background:#000"></div>
<div style="left:1376px;top:560px;width:1px;height:17px;background:#000"></div>
<div style="left:1376px;top:593px;width:1px;height:17px;background:#000"></div>
<div style="left:1376px;top:626px;width:1px;height:17px;background:#000"></div>
<div style="left:1376px;top:659px;width:1px;height:17px;background:#000"></div>
<div style="left:1376px;top:692px;width:1px;height:17px;background:#000"></div>
<div style="left:1417px;top:292px;width:1px;height:417px;background:#000"></div>
<div class="t" style="left:29px;top:228px;font-size:10.8px;color:#000;font-weight:normal;">Beverley 22nd Jun - 14:20 1m4f Hcap</div>
<div class="t" style="left:29px;top:244px;font-size:12px;color:#000;font-weight:bold;">Total matched</div>
<div class="t" style="left:29px;top:261px;font-size:12px;color:#000;font-weight:bold;">Last Updated</div>
<div class="t" style="left:29px;top:278px;font-size:12px;color:#000;font-weight:bold;">Number of Runners</div>
<div class="t" style="left:29px;top:295px;font-size:12px;color:#000;font-weight:bold;">Unmatched Bets Count</div>
<div class="t" style="left:29px;top:312px;font-size:12px;color:#000;font-weight:bold;">Balance</div>
<div class="t" style="right:1192px;top:244px;font-size:12px;color:#000;font-weight:bold;">347962.65</div>
<div class="t" style="right:1192px;top:261px;font-size:12px;color:#000;font-weight:bold;">14:19:50</div>
<div class="t" style="right:1192px;top:278px;font-size:12px;color:#000;font-weight:bold;">10</div>
<div class="t" style="right:1192px;top:295px;font-size:12px;color:#000;font-weight:bold;">0</div>
<div class="t" style="left:174px;top:312px;font-size:12px;color:#000;font-weight:bold;">£42.83</div>
<svg style="position:absolute;left:172px;top:310px;" width="6" height="6" viewBox="0 0 6 6"><path d="M0 0h6L0 6z" fill="#008A00"/></svg>
<div class="t" style="left:342px;top:244px;font-size:12px;color:#000;font-weight:bold;">Tx Count</div>
<div class="t" style="left:342px;top:261px;font-size:12px;color:#000;font-weight:bold;">Event Start</div>
<div class="t" style="left:342px;top:278px;font-size:12px;color:#000;font-weight:bold;">Countdown</div>
<div class="t" style="right:951px;top:244px;font-size:12px;color:#000;font-weight:bold;">0</div>
<div class="t" style="right:951px;top:261px;font-size:12px;color:#000;font-weight:bold;">14:20:00</div>
<div class="t" style="right:951px;top:278px;font-size:12px;color:#000;font-weight:bold;">00:00:09</div>
<div style="left:1376px;top:225px;width:1px;height:16px;background:#fff"></div>
<div style="left:1376px;top:259px;width:1px;height:16px;background:#fff"></div>
<div style="left:906px;top:224px;width:511px;height:68px;overflow:hidden"><div class="t" style="left:3px;top:5px;font-size:10.4px;color:#000">Bet Rules Options:</div><div class="t" style="left:113px;top:5px;font-size:10.4px;color:#000">BACK/LAY [OFFSET:x] [WITH_GREENING:TRUE/FALSE] [FORCE_OFFSET:TRUE/FALSE]</div><div class="t" style="left:3px;top:22px;font-size:10.4px;color:#000">Example:</div><div class="t" style="left:52px;top:22px;font-size:10.4px;color:#000">BACK OFFSET:1 FILL_KILL:TRUE KILL_DELAY:2.5 STOP:5</div><div class="t" style="left:3px;top:39px;font-size:10.4px;color:#000">Individual Command Options:</div><div class="t" style="left:146px;top:39px;font-size:10.4px;color:#000">CLOSE_TRADE / GREEN / CANCEL / CANCEL_ALL / CANCEL_ALL_BACK / CANCEL_ALL_LAY</div><div class="t" style="left:3px;top:56px;font-size:10.4px;color:#000">Global Command Options:</div><div class="t" style="left:148px;top:56px;font-size:10.4px;color:#000">CANCEL_ALL / TAKE_SP_ALL / KEEP_ALL / GREEN_ALL</div></div>
<div class="t" style="left:909px;top:295px;font-size:12px;color:#000;font-weight:bold;">Global Command</div>
<div class="t" style="left:29px;top:328px;font-size:12px;color:#000;font-weight:bold;">Runner names</div>
<div class="t" style="left:174px;top:328px;font-size:12px;color:#000;font-weight:bold;">P &amp; L</div>
<div class="t" style="left:253px;top:330px;font-size:10.5px;color:#000;font-weight:bold;transform:scaleX(0.9);transform-origin:0 0">Close Trade P &amp; L</div>
<div class="t" style="left:253px;top:348px;font-size:10.5px;color:#000;font-weight:bold;transform:scaleX(0.9);transform-origin:0 0">Green Up P &amp; L</div>
<div class="t" style="left:229px;width:600px;text-align:center;top:329px;font-size:12px;color:#000;font-weight:bold;">Back</div>
<div class="t" style="left:305px;width:600px;text-align:center;top:329px;font-size:12px;color:#000;font-weight:bold;">Lay</div>
<div class="t" style="left:798px;top:328px;font-size:12px;color:#000;font-weight:bold;">Last Traded Price</div>
<div class="t" style="left:798px;top:346px;font-size:12px;color:#000;font-weight:bold;">Runner Volume</div>
<div class="t" style="left:909px;top:328px;font-size:12px;color:#000;font-weight:bold;">Bet Rules / Individual Commands</div>
<div class="t" style="left:1379px;top:328px;font-size:12px;color:#000;font-weight:bold;">Odds</div>
<div class="t" style="left:909px;top:346px;font-size:12px;color:#000;font-weight:bold;">Report</div>
<div class="t" style="left:29px;top:364px;font-size:12px;color:#000;font-weight:bold;">De Mazzaro</div>
<div class="t" style="right:1192px;top:364px;font-size:12px;color:#000;font-weight:bold;">0.00</div>
<div class="t" style="right:1103px;top:364px;font-size:12px;color:#000;font-weight:bold;">0.00</div>
<div class="t" style="right:1103px;top:381px;font-size:12px;color:#000;font-weight:bold;">0.00</div>
<div class="t" style="right:1027px;top:364px;font-size:12px;color:#000;font-weight:bold;">2.22</div>
<div class="t" style="right:951px;top:364px;font-size:12px;color:#000;font-weight:bold;">2.24</div>
<div class="t" style="right:875px;top:364px;font-size:12px;color:#000;font-weight:bold;">2.26</div>
<div class="t" style="right:799px;top:364px;font-size:12px;color:#000;font-weight:bold;">2.28</div>
<div class="t" style="right:723px;top:364px;font-size:12px;color:#000;font-weight:bold;">2.3</div>
<div class="t" style="right:647px;top:364px;font-size:12px;color:#000;font-weight:bold;">2.32</div>
<div class="t" style="right:536px;top:364px;font-size:12px;color:#000;font-weight:bold;">2.28</div>
<div class="t" style="right:1027px;top:381px;font-size:12px;color:#000;font-weight:normal;">£430.33</div>
<div class="t" style="right:951px;top:381px;font-size:12px;color:#000;font-weight:normal;">£445.40</div>
<div class="t" style="right:875px;top:381px;font-size:12px;color:#000;font-weight:normal;">£450.99</div>
<div class="t" style="right:799px;top:381px;font-size:12px;color:#000;font-weight:normal;">£318.81</div>
<div class="t" style="right:723px;top:381px;font-size:12px;color:#000;font-weight:normal;">£1,104.45</div>
<div class="t" style="right:647px;top:381px;font-size:12px;color:#000;font-weight:normal;">£455.71</div>
<div class="t" style="right:536px;top:381px;font-size:12px;color:#000;font-weight:normal;">£228,070.50</div>
<div class="t" style="left:29px;top:397px;font-size:12px;color:#000;font-weight:bold;">Baladio</div>
<div class="t" style="right:1192px;top:397px;font-size:12px;color:#000;font-weight:bold;">0.00</div>
<div class="t" style="right:1103px;top:397px;font-size:12px;color:#000;font-weight:bold;">0.00</div>
<div class="t" style="right:1103px;top:414px;font-size:12px;color:#000;font-weight:bold;">0.00</div>
<div class="t" style="right:1027px;top:397px;font-size:12px;color:#000;font-weight:bold;">5.8</div>
<div class="t" style="right:951px;top:397px;font-size:12px;color:#000;font-weight:bold;">5.9</div>
<div class="t" style="right:875px;top:397px;font-size:12px;color:#000;font-weight:bold;">6</div>
<div class="t" style="right:799px;top:397px;font-size:12px;color:#000;font-weight:bold;">6.2</div>
<div class="t" style="right:723px;top:397px;font-size:12px;color:#000;font-weight:bold;">6.4</div>
<div class="t" style="right:647px;top:397px;font-size:12px;color:#000;font-weight:bold;">6.6</div>
<div class="t" style="right:536px;top:397px;font-size:12px;color:#000;font-weight:bold;">6</div>
<div class="t" style="right:1027px;top:414px;font-size:12px;color:#000;font-weight:normal;">£181.10</div>
<div class="t" style="right:951px;top:414px;font-size:12px;color:#000;font-weight:normal;">£305.70</div>
<div class="t" style="right:875px;top:414px;font-size:12px;color:#000;font-weight:normal;">£406.91</div>
<div class="t" style="right:799px;top:414px;font-size:12px;color:#000;font-weight:normal;">£180.62</div>
<div class="t" style="right:723px;top:414px;font-size:12px;color:#000;font-weight:normal;">£303.19</div>
<div class="t" style="right:647px;top:414px;font-size:12px;color:#000;font-weight:normal;">£223.25</div>
<div class="t" style="right:536px;top:414px;font-size:12px;color:#000;font-weight:normal;">£49,178.57</div>
<div class="t" style="left:29px;top:430px;font-size:12px;color:#000;font-weight:bold;">Le Bayou</div>
<div class="t" style="right:1192px;top:430px;font-size:12px;color:#000;font-weight:bold;">0.00</div>
<div class="t" style="right:1103px;top:430px;font-size:12px;color:#000;font-weight:bold;">0.00</div>
<div class="t" style="right:1103px;top:447px;font-size:12px;color:#000;font-weight:bold;">0.00</div>
<div class="t" style="right:1027px;top:430px;font-size:12px;color:#000;font-weight:bold;">14</div>
<div class="t" style="right:951px;top:430px;font-size:12px;color:#000;font-weight:bold;">14.5</div>
<div class="t" style="right:875px;top:430px;font-size:12px;color:#000;font-weight:bold;">15</div>
<div class="t" style="right:799px;top:430px;font-size:12px;color:#000;font-weight:bold;">15.5</div>
<div class="t" style="right:723px;top:430px;font-size:12px;color:#000;font-weight:bold;">16</div>
<div class="t" style="right:647px;top:430px;font-size:12px;color:#000;font-weight:bold;">16.5</div>
<div class="t" style="right:536px;top:430px;font-size:12px;color:#000;font-weight:bold;">15.5</div>
<div class="t" style="right:1027px;top:447px;font-size:12px;color:#000;font-weight:normal;">£51.09</div>
<div class="t" style="right:951px;top:447px;font-size:12px;color:#000;font-weight:normal;">£70.35</div>
<div class="t" style="right:875px;top:447px;font-size:12px;color:#000;font-weight:normal;">£61.94</div>
<div class="t" style="right:799px;top:447px;font-size:12px;color:#000;font-weight:normal;">£102.27</div>
<div class="t" style="right:723px;top:447px;font-size:12px;color:#000;font-weight:normal;">£92.20</div>
<div class="t" style="right:647px;top:447px;font-size:12px;color:#000;font-weight:normal;">£37.95</div>
<div class="t" style="right:536px;top:447px;font-size:12px;color:#000;font-weight:normal;">£18,312.23</div>
<div class="t" style="left:29px;top:463px;font-size:12px;color:#000;font-weight:bold;">Violette Szabo</div>
<div class="t" style="right:1192px;top:463px;font-size:12px;color:#000;font-weight:bold;">0.00</div>
<div class="t" style="right:1103px;top:463px;font-size:12px;color:#000;font-weight:bold;">0.00</div>
<div class="t" style="right:1103px;top:480px;font-size:12px;color:#000;font-weight:bold;">0.00</div>
<div class="t" style="right:1027px;top:463px;font-size:12px;color:#000;font-weight:bold;">8.4</div>
<div class="t" style="right:951px;top:463px;font-size:12px;color:#000;font-weight:bold;">8.6</div>
<div class="t" style="right:875px;top:463px;font-size:12px;color:#000;font-weight:bold;">8.8</div>
<div class="t" style="right:799px;top:463px;font-size:12px;color:#000;font-weight:bold;">9</div>
<div class="t" style="right:723px;top:463px;font-size:12px;color:#000;font-weight:bold;">9.2</div>
<div class="t" style="right:647px;top:463px;font-size:12px;color:#000;font-weight:bold;">9.4</div>
<div class="t" style="right:536px;top:463px;font-size:12px;color:#000;font-weight:bold;">9</div>
<div class="t" style="right:1027px;top:480px;font-size:12px;color:#000;font-weight:normal;">£81.55</div>
<div class="t" style="right:951px;top:480px;font-size:12px;color:#000;font-weight:normal;">£107.08</div>
<div class="t" style="right:875px;top:480px;font-size:12px;color:#000;font-weight:normal;">£105.04</div>
<div class="t" style="right:799px;top:480px;font-size:12px;color:#000;font-weight:normal;">£27.23</div>
<div class="t" style="right:723px;top:480px;font-size:12px;color:#000;font-weight:normal;">£59.28</div>
<div class="t" style="right:647px;top:480px;font-size:12px;color:#000;font-weight:normal;">£40.14</div>
<div class="t" style="right:536px;top:480px;font-size:12px;color:#000;font-weight:normal;">£16,692.98</div>
<div class="t" style="left:29px;top:496px;font-size:12px;color:#000;font-weight:bold;">Lady Shanawell</div>
<div class="t" style="right:1192px;top:496px;font-size:12px;color:#000;font-weight:bold;">0.00</div>
<div class="t" style="right:1103px;top:496px;font-size:12px;color:#000;font-weight:bold;">0.00</div>
<div class="t" style="right:1103px;top:513px;font-size:12px;color:#000;font-weight:bold;">0.00</div>
<div class="t" style="right:1027px;top:496px;font-size:12px;color:#000;font-weight:bold;">9.6</div>
<div class="t" style="right:951px;top:496px;font-size:12px;color:#000;font-weight:bold;">9.8</div>
<div class="t" style="right:875px;top:496px;font-size:12px;color:#000;font-weight:bold;">10</div>
<div class="t" style="right:799px;top:496px;font-size:12px;color:#000;font-weight:bold;">10.5</div>
<div class="t" style="right:723px;top:496px;font-size:12px;color:#000;font-weight:bold;">11</div>
<div class="t" style="right:647px;top:496px;font-size:12px;color:#000;font-weight:bold;">11.5</div>
<div class="t" style="right:536px;top:496px;font-size:12px;color:#000;font-weight:bold;">10.5</div>
<div class="t" style="right:1027px;top:513px;font-size:12px;color:#000;font-weight:normal;">£64.12</div>
<div class="t" style="right:951px;top:513px;font-size:12px;color:#000;font-weight:normal;">£81.66</div>
<div class="t" style="right:875px;top:513px;font-size:12px;color:#000;font-weight:normal;">£98.76</div>
<div class="t" style="right:799px;top:513px;font-size:12px;color:#000;font-weight:normal;">£83.35</div>
<div class="t" style="right:723px;top:513px;font-size:12px;color:#000;font-weight:normal;">£74.71</div>
<div class="t" style="right:647px;top:513px;font-size:12px;color:#000;font-weight:normal;">£36.14</div>
<div class="t" style="right:536px;top:513px;font-size:12px;color:#000;font-weight:normal;">£14,991.03</div>
<div class="t" style="left:29px;top:529px;font-size:12px;color:#000;font-weight:bold;">Coup De Gold</div>
<div class="t" style="right:1192px;top:529px;font-size:12px;color:#000;font-weight:bold;">0.00</div>
<div class="t" style="right:1103px;top:529px;font-size:12px;color:#000;font-weight:bold;">0.00</div>
<div class="t" style="right:1103px;top:546px;font-size:12px;color:#000;font-weight:bold;">0.00</div>
<div class="t" style="right:1027px;top:529px;font-size:12px;color:#000;font-weight:bold;">22</div>
<div class="t" style="right:951px;top:529px;font-size:12px;color:#000;font-weight:bold;">23</div>
<div class="t" style="right:875px;top:529px;font-size:12px;color:#000;font-weight:bold;">24</div>
<div class="t" style="right:799px;top:529px;font-size:12px;color:#000;font-weight:bold;">26</div>
<div class="t" style="right:723px;top:529px;font-size:12px;color:#000;font-weight:bold;">27</div>
<div class="t" style="right:647px;top:529px;font-size:12px;color:#000;font-weight:bold;">28</div>
<div class="t" style="right:536px;top:529px;font-size:12px;color:#000;font-weight:bold;">25</div>
<div class="t" style="right:1027px;top:546px;font-size:12px;color:#000;font-weight:normal;">£90.83</div>
<div class="t" style="right:951px;top:546px;font-size:12px;color:#000;font-weight:normal;">£14.32</div>
<div class="t" style="right:875px;top:546px;font-size:12px;color:#000;font-weight:normal;">£27.16</div>
<div class="t" style="right:799px;top:546px;font-size:12px;color:#000;font-weight:normal;">£24.96</div>
<div class="t" style="right:723px;top:546px;font-size:12px;color:#000;font-weight:normal;">£27.64</div>
<div class="t" style="right:647px;top:546px;font-size:12px;color:#000;font-weight:normal;">£19.48</div>
<div class="t" style="right:536px;top:546px;font-size:12px;color:#000;font-weight:normal;">£6,766.10</div>
<div class="t" style="left:29px;top:562px;font-size:12px;color:#000;font-weight:bold;">Flower Power</div>
<div class="t" style="right:1192px;top:562px;font-size:12px;color:#000;font-weight:bold;">0.00</div>
<div class="t" style="right:1103px;top:562px;font-size:12px;color:#000;font-weight:bold;">0.00</div>
<div class="t" style="right:1103px;top:579px;font-size:12px;color:#000;font-weight:bold;">0.00</div>
<div class="t" style="right:1027px;top:562px;font-size:12px;color:#000;font-weight:bold;">18</div>
<div class="t" style="right:951px;top:562px;font-size:12px;color:#000;font-weight:bold;">18.5</div>
<div class="t" style="right:875px;top:562px;font-size:12px;color:#000;font-weight:bold;">19</div>
<div class="t" style="right:799px;top:562px;font-size:12px;color:#000;font-weight:bold;">19.5</div>
<div class="t" style="right:723px;top:562px;font-size:12px;color:#000;font-weight:bold;">20</div>
<div class="t" style="right:647px;top:562px;font-size:12px;color:#000;font-weight:bold;">21</div>
<div class="t" style="right:536px;top:562px;font-size:12px;color:#000;font-weight:bold;">19</div>
<div class="t" style="right:1027px;top:579px;font-size:12px;color:#000;font-weight:normal;">£76.43</div>
<div class="t" style="right:951px;top:579px;font-size:12px;color:#000;font-weight:normal;">£36.39</div>
<div class="t" style="right:875px;top:579px;font-size:12px;color:#000;font-weight:normal;">£10.48</div>
<div class="t" style="right:799px;top:579px;font-size:12px;color:#000;font-weight:normal;">£25.80</div>
<div class="t" style="right:723px;top:579px;font-size:12px;color:#000;font-weight:normal;">£67.70</div>
<div class="t" style="right:647px;top:579px;font-size:12px;color:#000;font-weight:normal;">£35.95</div>
<div class="t" style="right:536px;top:579px;font-size:12px;color:#000;font-weight:normal;">£8,253.47</div>
<div class="t" style="left:29px;top:595px;font-size:12px;color:#000;font-weight:bold;">Buzz Lightyere</div>
<div class="t" style="right:1192px;top:595px;font-size:12px;color:#000;font-weight:bold;">0.00</div>
<div class="t" style="right:1103px;top:595px;font-size:12px;color:#000;font-weight:bold;">0.00</div>
<div class="t" style="right:1103px;top:612px;font-size:12px;color:#000;font-weight:bold;">0.00</div>
<div class="t" style="right:1027px;top:595px;font-size:12px;color:#000;font-weight:bold;">46</div>
<div class="t" style="right:951px;top:595px;font-size:12px;color:#000;font-weight:bold;">48</div>
<div class="t" style="right:875px;top:595px;font-size:12px;color:#000;font-weight:bold;">50</div>
<div class="t" style="right:799px;top:595px;font-size:12px;color:#000;font-weight:bold;">55</div>
<div class="t" style="right:723px;top:595px;font-size:12px;color:#000;font-weight:bold;">60</div>
<div class="t" style="right:647px;top:595px;font-size:12px;color:#000;font-weight:bold;">65</div>
<div class="t" style="right:536px;top:595px;font-size:12px;color:#000;font-weight:bold;">55</div>
<div class="t" style="right:1027px;top:612px;font-size:12px;color:#000;font-weight:normal;">£7.80</div>
<div class="t" style="right:951px;top:612px;font-size:12px;color:#000;font-weight:normal;">£20.35</div>
<div class="t" style="right:875px;top:612px;font-size:12px;color:#000;font-weight:normal;">£64.39</div>
<div class="t" style="right:799px;top:612px;font-size:12px;color:#000;font-weight:normal;">£3.90</div>
<div class="t" style="right:723px;top:612px;font-size:12px;color:#000;font-weight:normal;">£16.15</div>
<div class="t" style="right:647px;top:612px;font-size:12px;color:#000;font-weight:normal;">£42.28</div>
<div class="t" style="right:536px;top:612px;font-size:12px;color:#000;font-weight:normal;">£3,225.24</div>
<div class="t" style="left:29px;top:628px;font-size:12px;color:#000;font-weight:bold;">Ivors Involvement</div>
<div class="t" style="right:1192px;top:628px;font-size:12px;color:#000;font-weight:bold;">0.00</div>
<div class="t" style="right:1103px;top:628px;font-size:12px;color:#000;font-weight:bold;">0.00</div>
<div class="t" style="right:1103px;top:645px;font-size:12px;color:#000;font-weight:bold;">0.00</div>
<div class="t" style="right:1027px;top:628px;font-size:12px;color:#000;font-weight:bold;">90</div>
<div class="t" style="right:951px;top:628px;font-size:12px;color:#000;font-weight:bold;">95</div>
<div class="t" style="right:875px;top:628px;font-size:12px;color:#000;font-weight:bold;">100</div>
<div class="t" style="right:799px;top:628px;font-size:12px;color:#000;font-weight:bold;">110</div>
<div class="t" style="right:723px;top:628px;font-size:12px;color:#000;font-weight:bold;">120</div>
<div class="t" style="right:647px;top:628px;font-size:12px;color:#000;font-weight:bold;">130</div>
<div class="t" style="right:536px;top:628px;font-size:12px;color:#000;font-weight:bold;">110</div>
<div class="t" style="right:1027px;top:645px;font-size:12px;color:#000;font-weight:normal;">£13.19</div>
<div class="t" style="right:951px;top:645px;font-size:12px;color:#000;font-weight:normal;">£8.63</div>
<div class="t" style="right:875px;top:645px;font-size:12px;color:#000;font-weight:normal;">£29.72</div>
<div class="t" style="right:799px;top:645px;font-size:12px;color:#000;font-weight:normal;">£3.04</div>
<div class="t" style="right:723px;top:645px;font-size:12px;color:#000;font-weight:normal;">£141.40</div>
<div class="t" style="right:647px;top:645px;font-size:12px;color:#000;font-weight:normal;">£46.68</div>
<div class="t" style="right:536px;top:645px;font-size:12px;color:#000;font-weight:normal;">£1,562.43</div>
<div class="t" style="left:29px;top:661px;font-size:12px;color:#000;font-weight:bold;">Miss Mawatheeq</div>
<div class="t" style="right:1192px;top:661px;font-size:12px;color:#000;font-weight:bold;">0.00</div>
<div class="t" style="right:1103px;top:661px;font-size:12px;color:#000;font-weight:bold;">0.00</div>
<div class="t" style="right:1103px;top:678px;font-size:12px;color:#000;font-weight:bold;">0.00</div>
<div class="t" style="right:1027px;top:661px;font-size:12px;color:#000;font-weight:bold;">780</div>
<div class="t" style="right:951px;top:661px;font-size:12px;color:#000;font-weight:bold;">850</div>
<div class="t" style="right:875px;top:661px;font-size:12px;color:#000;font-weight:bold;">880</div>
<div class="t" style="right:799px;top:661px;font-size:12px;color:#000;font-weight:bold;">1000</div>
<div class="t" style="right:536px;top:661px;font-size:12px;color:#000;font-weight:bold;">990</div>
<div class="t" style="right:1027px;top:678px;font-size:12px;color:#000;font-weight:normal;">£5.76</div>
<div class="t" style="right:951px;top:678px;font-size:12px;color:#000;font-weight:normal;">£4.30</div>
<div class="t" style="right:875px;top:678px;font-size:12px;color:#000;font-weight:normal;">£5.38</div>
<div class="t" style="right:799px;top:678px;font-size:12px;color:#000;font-weight:normal;">£7.61</div>
<div class="t" style="right:536px;top:678px;font-size:12px;color:#000;font-weight:normal;">£910.10</div>
<div style="left:28px;top:208px;width:143px;height:16px;background:#D2D2D2"></div>
<div style="left:0px;top:224px;width:1417px;height:1px;background:#ABABAB"></div>
<div style="left:28px;top:224px;width:143px;height:1px;background:#217346"></div>
<div style="left:27px;top:208px;width:1px;height:15px;background:#BDBDBD"></div>
<div style="left:171px;top:208px;width:1px;height:15px;background:#BDBDBD"></div>
<div style="left:250px;top:208px;width:1px;height:15px;background:#BDBDBD"></div>
<div style="left:339px;top:208px;width:1px;height:15px;background:#BDBDBD"></div>
<div style="left:415px;top:208px;width:1px;height:15px;background:#BDBDBD"></div>
<div style="left:491px;top:208px;width:1px;height:15px;background:#BDBDBD"></div>
<div style="left:567px;top:208px;width:1px;height:15px;background:#BDBDBD"></div>
<div style="left:643px;top:208px;width:1px;height:15px;background:#BDBDBD"></div>
<div style="left:719px;top:208px;width:1px;height:15px;background:#BDBDBD"></div>
<div style="left:795px;top:208px;width:1px;height:15px;background:#BDBDBD"></div>
<div style="left:906px;top:208px;width:1px;height:15px;background:#BDBDBD"></div>
<div style="left:1376px;top:208px;width:1px;height:15px;background:#BDBDBD"></div>
<div style="left:26px;top:208px;width:1px;height:500px;background:#BDBDBD"></div>
<div class="t" style="left:-200px;width:600px;text-align:center;top:208px;font-size:13px;color:#217346;font-weight:normal;">B</div>
<div class="t" style="left:-89px;width:600px;text-align:center;top:208px;font-size:13px;color:#222;font-weight:normal;">C</div>
<div class="t" style="left:-5px;width:600px;text-align:center;top:208px;font-size:13px;color:#222;font-weight:normal;">D</div>
<div class="t" style="left:78px;width:600px;text-align:center;top:208px;font-size:13px;color:#222;font-weight:normal;">E</div>
<div class="t" style="left:154px;width:600px;text-align:center;top:208px;font-size:13px;color:#222;font-weight:normal;">F</div>
<div class="t" style="left:230px;width:600px;text-align:center;top:208px;font-size:13px;color:#222;font-weight:normal;">G</div>
<div class="t" style="left:306px;width:600px;text-align:center;top:208px;font-size:13px;color:#222;font-weight:normal;">H</div>
<div class="t" style="left:382px;width:600px;text-align:center;top:208px;font-size:13px;color:#222;font-weight:normal;">I</div>
<div class="t" style="left:458px;width:600px;text-align:center;top:208px;font-size:13px;color:#222;font-weight:normal;">J</div>
<div class="t" style="left:551px;width:600px;text-align:center;top:208px;font-size:13px;color:#222;font-weight:normal;">K</div>
<div class="t" style="left:842px;width:600px;text-align:center;top:208px;font-size:13px;color:#222;font-weight:normal;">L</div>
<div class="t" style="left:1108px;width:600px;text-align:center;top:208px;font-size:13px;color:#222;font-weight:normal;">M</div>
<div style="left:1px;top:225px;width:25px;height:16px;background:#D2D2D2"></div>
<div style="left:25px;top:225px;width:1px;height:16px;background:#217346"></div>
<div style="left:1px;top:241px;width:25px;height:1px;background:#BDBDBD"></div>
<div class="t" style="left:-286px;width:600px;text-align:center;top:225px;font-size:13px;color:#217346;font-weight:normal;">1</div>
<div style="left:1px;top:258px;width:25px;height:1px;background:#BDBDBD"></div>
<div class="t" style="left:-286px;width:600px;text-align:center;top:242px;font-size:13px;color:#222;font-weight:normal;">2</div>
<div style="left:1px;top:275px;width:25px;height:1px;background:#BDBDBD"></div>
<div class="t" style="left:-286px;width:600px;text-align:center;top:259px;font-size:13px;color:#222;font-weight:normal;">3</div>
<div style="left:1px;top:292px;width:25px;height:1px;background:#BDBDBD"></div>
<div class="t" style="left:-286px;width:600px;text-align:center;top:276px;font-size:13px;color:#222;font-weight:normal;">4</div>
<div style="left:1px;top:309px;width:25px;height:1px;background:#BDBDBD"></div>
<div class="t" style="left:-286px;width:600px;text-align:center;top:293px;font-size:13px;color:#222;font-weight:normal;">5</div>
<div style="left:1px;top:326px;width:25px;height:1px;background:#BDBDBD"></div>
<div class="t" style="left:-286px;width:600px;text-align:center;top:310px;font-size:13px;color:#222;font-weight:normal;">6</div>
<div style="left:1px;top:344px;width:25px;height:1px;background:#BDBDBD"></div>
<div class="t" style="left:-286px;width:600px;text-align:center;top:328px;font-size:13px;color:#222;font-weight:normal;">7</div>
<div style="left:1px;top:362px;width:25px;height:1px;background:#BDBDBD"></div>
<div class="t" style="left:-286px;width:600px;text-align:center;top:346px;font-size:13px;color:#222;font-weight:normal;">8</div>
<div style="left:1px;top:378px;width:25px;height:1px;background:#BDBDBD"></div>
<div class="t" style="left:-286px;width:600px;text-align:center;top:362px;font-size:13px;color:#222;font-weight:normal;">9</div>
<div style="left:1px;top:395px;width:25px;height:1px;background:#BDBDBD"></div>
<div class="t" style="left:-286px;width:600px;text-align:center;top:379px;font-size:13px;color:#222;font-weight:normal;">10</div>
<div style="left:1px;top:411px;width:25px;height:1px;background:#BDBDBD"></div>
<div class="t" style="left:-286px;width:600px;text-align:center;top:395px;font-size:13px;color:#222;font-weight:normal;">11</div>
<div style="left:1px;top:428px;width:25px;height:1px;background:#BDBDBD"></div>
<div class="t" style="left:-286px;width:600px;text-align:center;top:412px;font-size:13px;color:#222;font-weight:normal;">12</div>
<div style="left:1px;top:444px;width:25px;height:1px;background:#BDBDBD"></div>
<div class="t" style="left:-286px;width:600px;text-align:center;top:428px;font-size:13px;color:#222;font-weight:normal;">13</div>
<div style="left:1px;top:461px;width:25px;height:1px;background:#BDBDBD"></div>
<div class="t" style="left:-286px;width:600px;text-align:center;top:445px;font-size:13px;color:#222;font-weight:normal;">14</div>
<div style="left:1px;top:477px;width:25px;height:1px;background:#BDBDBD"></div>
<div class="t" style="left:-286px;width:600px;text-align:center;top:461px;font-size:13px;color:#222;font-weight:normal;">15</div>
<div style="left:1px;top:494px;width:25px;height:1px;background:#BDBDBD"></div>
<div class="t" style="left:-286px;width:600px;text-align:center;top:478px;font-size:13px;color:#222;font-weight:normal;">16</div>
<div style="left:1px;top:510px;width:25px;height:1px;background:#BDBDBD"></div>
<div class="t" style="left:-286px;width:600px;text-align:center;top:494px;font-size:13px;color:#222;font-weight:normal;">17</div>
<div style="left:1px;top:527px;width:25px;height:1px;background:#BDBDBD"></div>
<div class="t" style="left:-286px;width:600px;text-align:center;top:511px;font-size:13px;color:#222;font-weight:normal;">18</div>
<div style="left:1px;top:543px;width:25px;height:1px;background:#BDBDBD"></div>
<div class="t" style="left:-286px;width:600px;text-align:center;top:527px;font-size:13px;color:#222;font-weight:normal;">19</div>
<div style="left:1px;top:560px;width:25px;height:1px;background:#BDBDBD"></div>
<div class="t" style="left:-286px;width:600px;text-align:center;top:544px;font-size:13px;color:#222;font-weight:normal;">20</div>
<div style="left:1px;top:576px;width:25px;height:1px;background:#BDBDBD"></div>
<div class="t" style="left:-286px;width:600px;text-align:center;top:560px;font-size:13px;color:#222;font-weight:normal;">21</div>
<div style="left:1px;top:593px;width:25px;height:1px;background:#BDBDBD"></div>
<div class="t" style="left:-286px;width:600px;text-align:center;top:577px;font-size:13px;color:#222;font-weight:normal;">22</div>
<div style="left:1px;top:609px;width:25px;height:1px;background:#BDBDBD"></div>
<div class="t" style="left:-286px;width:600px;text-align:center;top:593px;font-size:13px;color:#222;font-weight:normal;">23</div>
<div style="left:1px;top:626px;width:25px;height:1px;background:#BDBDBD"></div>
<div class="t" style="left:-286px;width:600px;text-align:center;top:610px;font-size:13px;color:#222;font-weight:normal;">24</div>
<div style="left:1px;top:642px;width:25px;height:1px;background:#BDBDBD"></div>
<div class="t" style="left:-286px;width:600px;text-align:center;top:626px;font-size:13px;color:#222;font-weight:normal;">25</div>
<div style="left:1px;top:659px;width:25px;height:1px;background:#BDBDBD"></div>
<div class="t" style="left:-286px;width:600px;text-align:center;top:643px;font-size:13px;color:#222;font-weight:normal;">26</div>
<div style="left:1px;top:675px;width:25px;height:1px;background:#BDBDBD"></div>
<div class="t" style="left:-286px;width:600px;text-align:center;top:659px;font-size:13px;color:#222;font-weight:normal;">27</div>
<div style="left:1px;top:692px;width:25px;height:1px;background:#BDBDBD"></div>
<div class="t" style="left:-286px;width:600px;text-align:center;top:676px;font-size:13px;color:#222;font-weight:normal;">28</div>
<div style="left:1px;top:708px;width:25px;height:1px;background:#BDBDBD"></div>
<div class="t" style="left:-286px;width:600px;text-align:center;top:692px;font-size:13px;color:#222;font-weight:normal;">29</div>
<div style="left:25px;top:223px;width:148px;height:20px;border:2px solid #217346"></div>
<div style="left:169px;top:238px;width:6px;height:6px;background:#217346;border:1px solid #fff"></div>
<div style="left:1417px;top:208px;width:22px;height:500px;background:#E6E6E6"></div>
<div style="left:1421px;top:225px;width:15px;height:483px;background:#DADADA"></div>
<div style="left:1421px;top:210px;width:15px;height:14px;background:#fff;border:1px solid #C6C6C6"></div>
<svg style="position:absolute;left:1424px;top:214px;" width="9" height="6" viewBox="0 0 9 6"><path d="M0.5 5.5h8l-4-5z" fill="#777"/></svg>
<div style="left:1421px;top:225px;width:15px;height:17px;background:#fff;border:1px solid #C6C6C6"></div>
<div style="left:1421px;top:692px;width:15px;height:15px;background:#fff;border:1px solid #C6C6C6"></div>
<svg style="position:absolute;left:1424px;top:697px;" width="9" height="6" viewBox="0 0 9 6"><path d="M0.5 0.5h8l-4 5z" fill="#777"/></svg>
<div style="left:1417px;top:225px;width:1px;height:483px;background:#C6C6C6"></div>
<div style="left:1px;top:708px;width:1438px;height:28px;background:#E6E6E6"></div>
<div style="left:1px;top:708px;width:100px;height:1px;background:#C6C6C6"></div>
<div style="left:185px;top:708px;width:1254px;height:1px;background:#C6C6C6"></div>
<div style="left:1px;top:736px;width:1438px;height:1px;background:#D4D4D4"></div>
<svg style="position:absolute;left:27px;top:717px;" width="6" height="10" viewBox="0 0 6 10"><path d="M5 0.5v9L0.5 5z" fill="#BDBDBD"/></svg>
<svg style="position:absolute;left:56px;top:717px;" width="6" height="10" viewBox="0 0 6 10"><path d="M0.5 0.5v9L5 5z" fill="#217346"/></svg>
<div style="left:101px;top:708px;width:85px;height:24px;background:#fff;border-left:1px solid #C6C6C6;border-right:1px solid #C6C6C6"></div>
<div style="left:101px;top:731px;width:85px;height:2px;background:#217346"></div>
<div class="t" style="left:113px;top:714px;font-size:13px;color:#217346;font-weight:bold;">Bet Angel</div>
<div class="t" style="left:200px;top:714px;font-size:12.5px;color:#444;font-weight:normal;">Bet Angel (2)</div>
<div class="t" style="left:305px;top:714px;font-size:12.5px;color:#444;font-weight:normal;">Bet Angel (3)</div>
<div class="t" style="left:410px;top:714px;font-size:12.5px;color:#444;font-weight:normal;">Bet Angel (4)</div>
<div class="t" style="left:515px;top:714px;font-size:12.5px;color:#444;font-weight:normal;">Bet Angel (5)</div>
<div class="t" style="left:620px;top:714px;font-size:12.5px;color:#444;font-weight:normal;">Bet Angel (6)</div>
<div class="t" style="left:725px;top:714px;font-size:12.5px;color:#444;font-weight:normal;">Bet Angel (7</div>
<div style="left:290px;top:712px;width:1px;height:19px;background:#BDBDBD"></div>
<div style="left:395px;top:712px;width:1px;height:19px;background:#BDBDBD"></div>
<div style="left:500px;top:712px;width:1px;height:19px;background:#BDBDBD"></div>
<div style="left:605px;top:712px;width:1px;height:19px;background:#BDBDBD"></div>
<div style="left:710px;top:712px;width:1px;height:19px;background:#BDBDBD"></div>
<svg style="position:absolute;left:803px;top:723px;" width="13" height="4" viewBox="0 0 13 4"><rect x="0.5" y="0.5" width="2.5" height="2.5" fill="#217346"/><rect x="5" y="0.5" width="2.5" height="2.5" fill="#217346"/><rect x="9.5" y="0.5" width="2.5" height="2.5" fill="#217346"/></svg>
<svg style="position:absolute;left:828px;top:714px;" width="17" height="17" viewBox="0 0 17 17"><circle cx="8.5" cy="8.5" r="7.5" fill="none" stroke="#666" stroke-width="1.2"/><path d="M8.5 4.5v8M4.5 8.5h8" stroke="#666" stroke-width="1.4"/></svg>
<svg style="position:absolute;left:863px;top:716px;" width="4" height="12" viewBox="0 0 4 12"><circle cx="2" cy="1.5" r="1" fill="#AAA"/><circle cx="2" cy="6" r="1" fill="#AAA"/><circle cx="2" cy="10.5" r="1" fill="#AAA"/></svg>
<div style="left:881px;top:715px;width:537px;height:15px;background:#DADADA"></div>
<div style="left:881px;top:715px;width:15px;height:15px;background:#fff;border:1px solid #C6C6C6"></div>
<svg style="position:absolute;left:885px;top:718px;" width="6" height="9" viewBox="0 0 6 9"><path d="M5.5 0.5v8L0.5 4.5z" fill="#777"/></svg>
<div style="left:912px;top:715px;width:261px;height:15px;background:#fff;border:1px solid #C6C6C6"></div>
<div style="left:1403px;top:715px;width:15px;height:15px;background:#fff;border:1px solid #C6C6C6"></div>
<svg style="position:absolute;left:1408px;top:718px;" width="6" height="9" viewBox="0 0 6 9"><path d="M0.5 0.5v8L5.5 4.5z" fill="#777"/></svg>
<div style="left:1px;top:737px;width:1438px;height:21px;background:#F3F2F1"></div>
<div class="t" style="left:8px;top:742px;font-size:11px;color:#444;font-weight:normal;">Ready</div>
<svg style="position:absolute;left:59px;top:740px;" width="15" height="15" viewBox="0 0 15 15"><rect x="0.5" y="1.5" width="12" height="11" fill="none" stroke="#555"/><path d="M0.5 4h12M3 6.5h3M3 9h3" stroke="#555"/><circle cx="10.5" cy="10" r="3.5" fill="#F3F2F1" stroke="#555"/><circle cx="10.5" cy="10" r="1.5" fill="#555"/></svg>
<div style="left:1128px;top:737px;width:40px;height:21px;background:#D2D2D2"></div>
<svg style="position:absolute;left:1141px;top:740px;" width="13" height="13" viewBox="0 0 13 13"><path d="M0.5 0.5h12v12h-12z M0.5 4.5h12M0.5 8.5h12M4.5 0.5v12M8.5 0.5v12" fill="none" stroke="#444"/></svg>
<svg style="position:absolute;left:1181px;top:740px;" width="14" height="13" viewBox="0 0 14 13"><rect x="0.5" y="0.5" width="13" height="12" fill="none" stroke="#444"/><rect x="3.5" y="3" width="7" height="7" fill="none" stroke="#444"/><path d="M5 5h4M5 7h4" stroke="#444"/></svg>
<svg style="position:absolute;left:1221px;top:740px;" width="14" height="13" viewBox="0 0 14 13"><path d="M0.5 0.5h13v12h-13z M0.5 7.5h7v-7M4 0.5v4" fill="none" stroke="#444"/></svg>
<div style="left:1253px;top:746px;width:9px;height:1px;background:#444"></div>
<div style="left:1267px;top:747px;width:100px;height:1px;background:#A6A6A6"></div>
<div style="left:1315px;top:742px;width:5px;height:11px;background:#666"></div>
<div style="left:1372px;top:746px;width:9px;height:1px;background:#444"></div>
<div style="left:1376px;top:742px;width:1px;height:9px;background:#444"></div>
<div class="t" style="left:1393px;top:742px;font-size:10.8px;color:#444;font-weight:normal;">100%</div>
<div style="left:0px;top:35px;width:1px;height:724px;background:#217346"></div>
<div style="left:1439px;top:35px;width:1px;height:724px;background:#217346"></div>
<div style="left:0px;top:758px;width:1440px;height:1px;background:#217346"></div>
</body></html>
